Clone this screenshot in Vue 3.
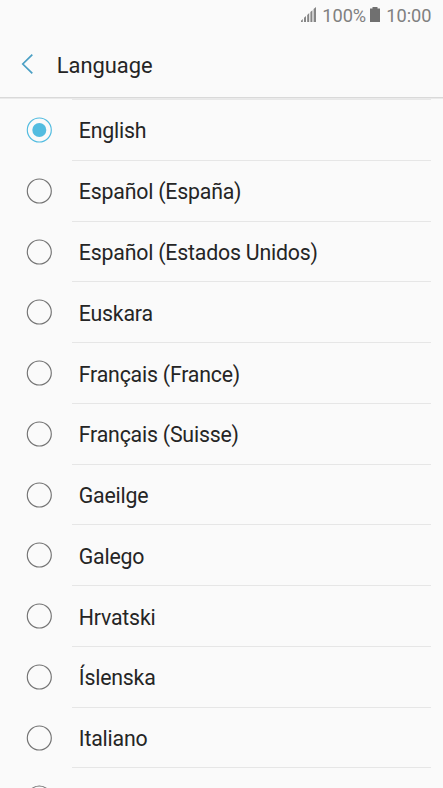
<script setup>
import { ref } from 'vue'

const languages = [
  'English',
  'Español (España)',
  'Español (Estados Unidos)',
  'Euskara',
  'Français (France)',
  'Français (Suisse)',
  'Gaeilge',
  'Galego',
  'Hrvatski',
  'Íslenska',
  'Italiano',
  '',
]
const selected = ref(0)
</script>

<template>
  <div class="screen">
    <div class="status">
      <svg class="signal" width="16" height="16" viewBox="0 0 16 16">
        <path d="M0 15v-1.3L1.8 12v3zM3 15v-4.2l2-1.7V15zM6.2 15V8l2-1.9V15zM9.4 15V5.1l2-1.9V15zM12.6 15V2.1L15 0v15z" />
      </svg>
      <span class="percent">100%</span>
      <svg class="battery" width="10" height="16" viewBox="0 0 10 16">
        <path d="M2.5 0h5v1.5H10V15H0V1.5h2.5z" />
      </svg>
      <span class="time">10:00</span>
    </div>
    <header class="header">
      <svg class="back" width="14" height="22" viewBox="0 0 14 22">
        <path d="M12.3 1.7L2.8 11l9.5 9.3" />
      </svg>
      <h1 class="title">Language</h1>
    </header>
    <ul class="list">
      <li v-for="(name, i) in languages" :key="i" class="row" @click="selected = i">
        <svg class="radio" :class="{ on: selected === i }" width="26" height="26" viewBox="0 0 26 26">
          <circle class="ring" cx="13.3" cy="13" r="12" />
          <circle v-if="selected === i" class="dot" cx="13.3" cy="13" r="7" />
        </svg>
        <div class="cell"><span class="name">{{ name }}</span></div>
      </li>
    </ul>
  </div>
</template>

<style>
body {
  background: #fafafa;
  overflow: hidden;
}
</style>

<style scoped>
.screen {
  display: flex;
  flex-direction: column;
  height: 788px;
  overflow: hidden;
  background: #fafafa;
  color: #252525;
  font-family: Roboto, sans-serif;
}
.status {
  display: flex;
  flex: none;
  justify-content: flex-end;
  align-items: center;
  height: 30px;
  padding-right: 11.5px;
  box-sizing: border-box;
  color: #808080;
  font-size: 18.2px;
}
.signal {
  fill: #858585;
  margin-right: 5px;
}
.battery {
  fill: #707070;
  margin: 0 6px 0 4px;
}
.header {
  display: flex;
  flex: none;
  align-items: center;
  height: 69px;
  padding: 0 0 0 20px;
  box-sizing: border-box;
  border-bottom: 1px solid #eaeaea;
  box-shadow: inset 0 -1px #d9d9d9;
}
.back {
  fill: none;
  stroke: #4a9fc4;
  stroke-width: 1.7;
}
.title {
  margin: 4px 0 0 22.7px;
  font-size: 21.9px;
  font-weight: 400;
  line-height: 28px;
}
.list {
  flex: none;
  margin: 0;
  padding: 0 12px 0 26px;
  list-style: none;
}
.list::before {
  content: '';
  display: block;
  height: 1px;
  margin-left: 46px;
  background: #e8e8e8;
}
.row {
  display: flex;
  height: 60.77px;
}
.radio {
  flex: none;
  margin: 17px 20px 0 0;
}
.ring {
  fill: none;
  stroke: #747474;
  stroke-width: 1.15;
}
.on .ring {
  stroke: #52bce0;
}
.dot {
  fill: #52bce0;
}
.cell {
  display: flex;
  flex: 1;
  align-items: center;
  padding: 3.2px 0 0 6.8px;
  border-bottom: 1px solid #e6e6e6;
}
.name {
  font-size: 21.3px;
  line-height: 28px;
  letter-spacing: -0.2px;
}
</style>
